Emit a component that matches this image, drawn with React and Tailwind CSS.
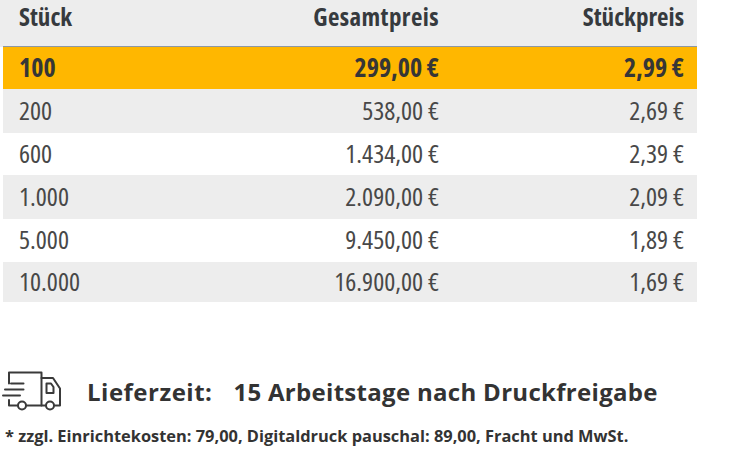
import React from "react";

const rows = [
  { qty: "100", total: "299,00 €", unit: "2,99 €", h: "h-[42px]", bg: "bg-[#ffb700]", active: true },
  { qty: "200", total: "538,00 €", unit: "2,69 €", h: "h-[44px]", bg: "bg-[#ededed]" },
  { qty: "600", total: "1.434,00 €", unit: "2,39 €", h: "h-[42px]", bg: "bg-white" },
  { qty: "1.000", total: "2.090,00 €", unit: "2,09 €", h: "h-[44px]", bg: "bg-[#ededed]" },
  { qty: "5.000", total: "9.450,00 €", unit: "1,89 €", h: "h-[43px]", bg: "bg-white" },
  { qty: "10.000", total: "16.900,00 €", unit: "1,69 €", h: "h-[40px]", bg: "bg-[#ededed]" },
];

function Truck() {
  return (
    <svg
      width="64"
      height="50"
      viewBox="0 0 64 50"
      fill="none"
      stroke="#3a3a3a"
      strokeWidth="2"
      strokeLinecap="round"
      strokeLinejoin="round"
    >
      <path d="M9 20.5V9.5h32.5v33" />
      <path d="M41.5 15h11.5l7 10.5v17h-5.5" />
      <path d="M46.5 20.5h4.5l2.5 3.5v6h-7z" />
      <path d="M11 20.5h12.5M5 26.5h18.5M3 32.5h17" />
      <path d="M9 37v5.5h9M26 42.5h20" />
      <circle cx="22" cy="42.5" r="4" />
      <circle cx="50" cy="42.5" r="4" />
    </svg>
  );
}

export default function App() {
  return (
    <div className="w-[730px] h-[468px] bg-white overflow-hidden font-['Open_Sans',sans-serif] text-[#333]">
      <div className="w-[697px] bg-[#ededed] [font-stretch:75%]">
        <div className="ml-[3px] h-[47px] grid grid-cols-[200px_249px_245px] border-b border-[#8d98a4] text-[25px] font-bold text-[#363a3e] leading-none">
          <div className="pl-[16px] pt-[4px]">Stück</div>
          <div className="text-right pr-[13px] pt-[4px] tracking-[0.4px]">Gesamtpreis</div>
          <div className="text-right pr-[13px] pt-[4px]">Stückpreis</div>
        </div>
      </div>
      <div className="ml-[3px] w-[694px] [font-stretch:75%] leading-none">
        {rows.map((r) => (
          <div
            key={r.qty}
            className={`${r.h} ${r.bg} grid grid-cols-[200px_249px_245px] items-center pb-[3px] text-[26px] ${
              r.active ? "font-bold text-[#363636]" : "text-[#484848]"
            }`}
          >
            <div className="pl-[16px]">{r.qty}</div>
            <div className="text-right pr-[13px]">{r.total}</div>
            <div className="text-right pr-[13px]">{r.unit}</div>
          </div>
        ))}
      </div>
      <div className="mt-[61px] h-[52px] flex items-start">
        <Truck />
        <div className="ml-[23px] pt-[17px] text-[24px] leading-none font-bold tracking-[0.5px]">
          Lieferzeit:
        </div>
        <div className="ml-[21px] pt-[17px] text-[24px] leading-none font-bold tracking-[0.3px]">
          15 Arbeitstage nach Druckfreigabe
        </div>
      </div>
      <div className="ml-[5px] mt-[13px] text-[16.4px] leading-none font-bold">
        * zzgl. Einrichtekosten: 79,00, Digitaldruck pauschal: 89,00, Fracht und MwSt.
      </div>
    </div>
  );
}
